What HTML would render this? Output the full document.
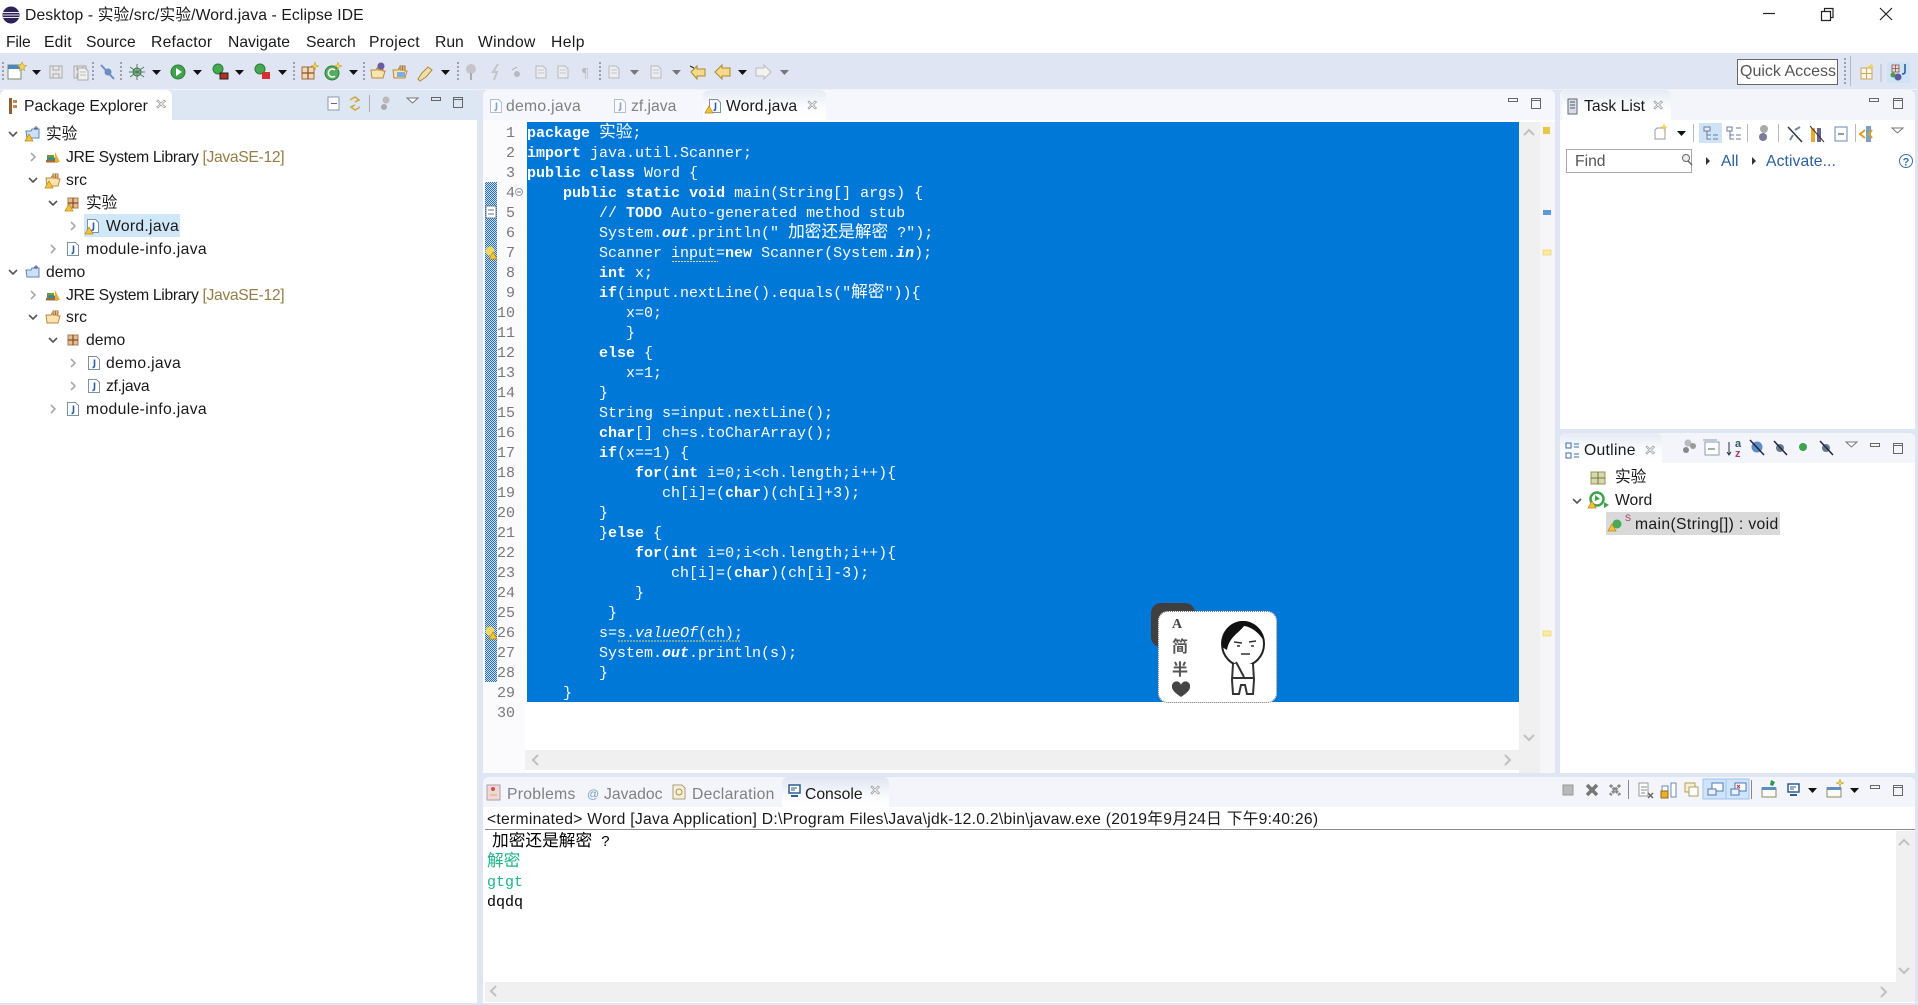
<!DOCTYPE html>
<html lang="zh"><head><meta charset="utf-8"><title>Desktop - 实验/src/实验/Word.java - Eclipse IDE</title>
<style>
html,body{margin:0;padding:0}
body{width:1918px;height:1005px;position:relative;overflow:hidden;background:#e0e5f4;font-family:"Liberation Sans","Noto Sans CJK SC",sans-serif;font-size:15.7px;color:#1a1a1a}
.a{position:absolute}
.t{position:absolute;white-space:nowrap;line-height:20px}
#top{left:0;top:0;width:1918px;height:53px;background:#fff}
.p{position:absolute;background:#fff;border-radius:6px 6px 0 0;overflow:hidden}
.h{position:absolute;left:0;top:0;right:0;height:30px;background:#f3f5fb}
.tab{position:absolute;top:0;height:30px;background:linear-gradient(#e6eaf4,#fbfcfe 60%,#fff);border-radius:6px 6px 0 0}
.g{color:#808080}
.m{font-family:"Liberation Mono","Noto Sans CJK SC",monospace;font-size:15px;white-space:pre}
#code{position:absolute;left:527px;top:122px;width:992px;height:578px;padding-top:2px;background:#0078d7;color:#fff;font-family:"Liberation Mono",monospace;font-size:15px}
#code div{height:20px;line-height:20px;white-space:pre}
.c{font-family:"Noto Sans CJK SC",sans-serif;font-size:16.7px;line-height:0}
#nums{position:absolute;left:490px;top:124px;width:25px;text-align:right;font-family:"Liberation Mono",monospace;font-size:15px;color:#787878}
#nums div{height:20px;line-height:20px}
.lnk{color:#2a5f9e}
svg#o{position:absolute;left:0;top:0;z-index:5}
.n{letter-spacing:.3px}
</style></head><body>
<div class="a" id="top"></div>
<div class="t" style="left:25px;top:6px;letter-spacing:.12px">Desktop - 实验/src/实验/Word.java - Eclipse IDE</div>
<div class="t" style="left:6px;top:33px;letter-spacing:-.2px">File</div>
<div class="t" style="left:44px;top:33px;letter-spacing:.2px">Edit</div>
<div class="t" style="left:86px;top:33px">Source</div>
<div class="t" style="left:151px;top:33px;letter-spacing:.25px">Refactor</div>
<div class="t" style="left:228px;top:33px">Navigate</div>
<div class="t" style="left:306px;top:33px">Search</div>
<div class="t" style="left:369px;top:33px;letter-spacing:.3px">Project</div>
<div class="t" style="left:435px;top:33px">Run</div>
<div class="t" style="left:478px;top:33px;letter-spacing:.3px">Window</div>
<div class="t" style="left:551px;top:33px;letter-spacing:.4px">Help</div>
<div class="a" style="left:0;top:89px;width:1918px;height:1px;background:#eef1f9"></div>

<div class="a" style="left:1737px;top:59px;width:99px;height:24px;border:1px solid #666;background:#fff"></div>
<div class="t" style="left:1740px;top:62px;color:#555;font-size:16px">Quick Access</div>

<!-- Left -->
<div class="p" style="left:0;top:90px;width:477px;height:913px">
<div class="h" style="background:#dde6f3"></div>
<div class="tab" style="left:0;width:172px;background:#fff"></div>
</div>
<div class="t" style="left:24px;top:97px">Package Explorer</div>
<div class="t" style="left:46px;top:125px">实验</div>
<div class="t" style="left:66px;top:148px;letter-spacing:-.34px">JRE System Library <span style="color:#957d47">[JavaSE-12]</span></div>
<div class="t" style="left:66px;top:171px">src</div>
<div class="t" style="left:86px;top:194px">实验</div>
<div class="a" style="left:84px;top:214px;width:96px;height:23px;background:#d0e7f8"></div>
<div class="t n" style="left:106px;top:217px">Word.java</div>
<div class="t" style="left:86px;top:240px;letter-spacing:.37px">module-info.java</div>
<div class="t" style="left:46px;top:263px">demo</div>
<div class="t" style="left:66px;top:286px;letter-spacing:-.34px">JRE System Library <span style="color:#957d47">[JavaSE-12]</span></div>
<div class="t" style="left:66px;top:308px">src</div>
<div class="t" style="left:86px;top:331px">demo</div>
<div class="t n" style="left:106px;top:354px">demo.java</div>
<div class="t" style="left:106px;top:377px;letter-spacing:-.3px">zf.java</div>
<div class="t" style="left:86px;top:400px;letter-spacing:.37px">module-info.java</div>

<!-- Editor -->
<div class="p" style="left:483px;top:90px;width:1072px;height:683px">
<div class="h" style="background:#f6f7fc"></div>
<div class="tab" style="left:220px;width:123px"></div>
<div class="a" style="left:0;top:30px;width:42px;height:653px;background:#fbfbfd"></div>
<div class="a" style="left:1036px;top:32px;width:21px;height:651px;background:#f0f0f0"></div>
<div class="a" style="left:1057px;top:32px;width:15px;height:651px;background:#f6f6f9"></div>
<div class="a" style="left:42px;top:660px;width:994px;height:20px;background:#f0f0f0"></div>
</div>
<div class="t g n" style="left:506px;top:97px">demo.java</div>
<div class="t g" style="left:631px;top:97px">zf.java</div>
<div class="t" style="left:726px;top:97px;letter-spacing:.1px">Word.java</div>

<div class="a" style="left:485px;top:182px;width:12px;height:500px;background:conic-gradient(#2a70b0 25%,#c8dcea 0 50%,#2a70b0 0 75%,#c8dcea 0) 0 0/2px 2px"></div>

<div id="nums"><div>1</div><div>2</div><div>3</div><div>4</div><div>5</div><div>6</div><div>7</div><div>8</div><div>9</div><div>10</div><div>11</div><div>12</div><div>13</div><div>14</div><div>15</div><div>16</div><div>17</div><div>18</div><div>19</div><div>20</div><div>21</div><div>22</div><div>23</div><div>24</div><div>25</div><div>26</div><div>27</div><div>28</div><div>29</div><div>30</div></div>

<div id="code">
<div><b>package</b> <span class="c">实验</span>;</div>
<div><b>import</b> java.util.Scanner;</div>
<div><b>public</b> <b>class</b> Word {</div>
<div>    <b>public</b> <b>static</b> <b>void</b> main(String[] args) {</div>
<div>        // <b>TODO</b> Auto-generated method stub</div>
<div>        System.<b><i>out</i></b>.println(" <span class="c">加密还是解密</span> ?");</div>
<div>        Scanner input=<b>new</b> Scanner(System.<b><i>in</i></b>);</div>
<div>        <b>int</b> x;</div>
<div>        <b>if</b>(input.nextLine().equals("<span class="c">解密</span>")){</div>
<div>           x=0;</div>
<div>           }</div>
<div>        <b>else</b> {</div>
<div>           x=1;</div>
<div>        }</div>
<div>        String s=input.nextLine();</div>
<div>        <b>char</b>[] ch=s.toCharArray();</div>
<div>        <b>if</b>(x==1) {</div>
<div>            <b>for</b>(<b>int</b> i=0;i&lt;ch.length;i++){</div>
<div>               ch[i]=(<b>char</b>)(ch[i]+3);</div>
<div>        }</div>
<div>        }<b>else</b> {</div>
<div>            <b>for</b>(<b>int</b> i=0;i&lt;ch.length;i++){</div>
<div>                ch[i]=(<b>char</b>)(ch[i]-3);</div>
<div>            }</div>
<div>         }</div>
<div>        s=s.<i>valueOf</i>(ch);</div>
<div>        System.<b><i>out</i></b>.println(s);</div>
<div>        }</div>
<div>    }</div>
</div>

<!-- Task list -->
<div class="p" style="left:1560px;top:90px;width:355px;height:339px">
<div class="h"></div>
<div class="tab" style="left:2px;width:109px"></div>
<div class="a" style="left:0;top:30px;width:355px;height:309px;background:#fff"></div>
</div>
<div class="t" style="left:1584px;top:97px">Task List</div>
<div class="a" style="left:1566px;top:149px;width:124px;height:22px;border:1px solid #aaa;background:#fff"></div>
<div class="t" style="left:1575px;top:152px;color:#555">Find</div>
<div class="t lnk" style="left:1721px;top:152px">All</div>
<div class="t lnk" style="left:1766px;top:152px;letter-spacing:.1px">Activate...</div>

<!-- Outline -->
<div class="p" style="left:1560px;top:433px;width:355px;height:340px">
<div class="h"></div>
<div class="tab" style="left:0;width:102px"></div>
</div>
<div class="t" style="left:1584px;top:441px;letter-spacing:.3px">Outline</div>
<div class="t" style="left:1615px;top:468px">实验</div>
<div class="t" style="left:1615px;top:491px">Word</div>
<div class="a" style="left:1606px;top:512px;width:174px;height:23px;background:#d9d9d9"></div>
<div class="t" style="left:1635px;top:515px;letter-spacing:.36px">main(String[]) : void</div>

<!-- Console -->
<div class="p" style="left:483px;top:777px;width:1432px;height:226px">
<div class="h"></div>
<div class="tab" style="left:299px;width:107px;background:linear-gradient(#dfe5f0,#fbfcfe 70%,#fff)"></div>
<div class="a" style="left:0;top:30px;width:1432px;height:196px;background:#fff"></div>
<div class="a" style="left:2px;top:52px;width:1430px;height:1px;background:#8a8a8a"></div>
<div class="a" style="left:1413px;top:54px;width:19px;height:151px;background:#f0f0f0"></div>
<div class="a" style="left:2px;top:205px;width:1430px;height:20px;background:#f0f0f0"></div>
</div>
<div class="t g n" style="left:507px;top:785px">Problems</div>
<div class="t g" style="left:604px;top:785px">Javadoc</div>
<div class="t g n" style="left:692px;top:785px">Declaration</div>
<div class="t" style="left:805px;top:785px">Console</div>
<div class="t" style="left:487px;top:810px;letter-spacing:.27px">&lt;terminated&gt; Word [Java Application] D:\Program Files\Java\jdk-12.0.2\bin\javaw.exe (2019年9月24日 下午9:40:26)</div>
<div class="t m" style="left:483px;top:833px;color:#000"> <span class="c">加密还是解密</span> ?</div>
<div class="t m" style="left:487px;top:853px;color:#1fb488"><span class="c">解密</span></div>
<div class="t m" style="left:487px;top:873px;color:#1fb488">gtgt</div>
<div class="t m" style="left:487px;top:893px;color:#000">dqdq</div>

<!-- Sticker -->
<div class="a" style="left:1151px;top:603px;width:44px;height:44px;background:#3f3f3f;border-radius:10px"></div>
<div class="a" style="left:1158px;top:611px;width:119px;height:92px;background:#fff;border:1px dotted #777;border-radius:10px;box-sizing:border-box"></div>
<div class="t" style="left:1172px;top:615px;font:bold 14px/20px 'Liberation Serif',serif;color:#444">A</div>
<div class="t" style="left:1172px;top:635px;font:bold 16px/20px 'Noto Sans CJK SC',sans-serif;color:#555">简</div>
<div class="t" style="left:1172px;top:658px;font:bold 16px/20px 'Noto Sans CJK SC',sans-serif;color:#555">半</div>

<svg id="o" width="1918" height="1005" viewBox="0 0 1918 1005" fill="none">
<defs>
<g id="w"><path d="M4 0l4 7H0z" fill="#f5c23c" stroke="#b8860b" stroke-width=".7"/></g>
<g id="jf"><path d="M2.5 1.5h8l3 3v10h-11z" fill="#fff" stroke="#7f8fa6"/><path d="M8.5 4.5v6q0 2-2 2" stroke="#2a5ea8" stroke-width="1.6"/></g>
<g id="pk"><path d="M3 3h10v10H3z" fill="#e3bd96" stroke="#a9794a"/><path d="M8 3v10M3 8h10" stroke="#8a4f1f" stroke-width="1.2"/></g>
<g id="src"><path d="M1 6h5l1-2h6v3h2l-2 7H2z" fill="#fbe3b0" stroke="#b78a3e"/><path d="M8 2h5v4H8zM10.500 2v4" stroke="#a97430"/></g>
<g id="jre"><path d="M1 11h12v2.500H1z" fill="#a46a3c"/><path d="M2 8.500h9V11H2z" fill="#3d8a8a"/><path d="M2 6h7v2.500H2z" fill="#6e9a3c"/><path d="M10 3l5 10h-5z" fill="#e8b030"/></g>
<g id="prj"><path d="M1 6h5l1-2h7v9H2z" fill="#cfe0f4" stroke="#5a87b8"/><path d="M11 1v4M9 3h4" stroke="#6c5aa0"/></g>
<g id="ar"><path d="M6 4l4 4-4 4" stroke="#aaa" stroke-width="1.6"/></g>
<g id="ad"><path d="M4 6l4 4 4-4" stroke="#555" stroke-width="1.6"/></g>
<g id="d"><path d="M0 0h9l-4.500 5z" fill="#111"/></g>
<g id="dg"><path d="M0 0h9l-4.500 5z" fill="#777"/></g>
<g id="x"><path d="M1 2l1-1 3 3 3-3 1.500 1-3 3 3 3-1.500 1-3-3-3 3-1-1 3-3z" fill="#fff" stroke="#a0a0a0" stroke-width=".8"/></g>
<g id="mn"><path d="M.5.500h9v3h-9z" stroke="#666"/></g>
<g id="mx"><path d="M.5.500h9v10h-9z" stroke="#666"/><path d="M.5 2.500h9" stroke="#666"/></g>
<g id="tv"><path d="M0 0h11l-5.500 5z" fill="#fff" stroke="#777"/></g>
<g id="run"><circle cx="8" cy="8" r="7" fill="#3fa34d" stroke="#2c7d39"/><path d="M6 4l6 4-6 4z" fill="#fff"/></g>
<g id="gb"><circle cx="6" cy="6" r="5" fill="#47a854" stroke="#2c7d39"/></g>
<g id="gray"><path d="M3 2h7l3 3v9H3z" fill="#f0f0f0" stroke="#aaa"/><path d="M5 6h6M5 9h6" stroke="#bbb"/></g>
<g id="sv"><path d="M2 2h12v12H2z" fill="#e8e8ea" stroke="#aaa"/><path d="M5 2v4h6V2M5 14v-4h6v4" stroke="#aaa"/></g>
<g id="mon"><path d="M3 2h11v8H3z" fill="#fff" stroke="#2d5e8e" stroke-width="1.500"/><path d="M5 5h6M5 7h4" stroke="#2d5e8e"/><path d="M5 13h7" stroke="#2d5e8e" stroke-width="2"/></g>
<g id="pin"><path d="M1 5h14v9H1z" fill="#fbfbf4" stroke="#8a8a6a"/><path d="M1 4h14v3H1z" fill="#5a8ec4"/></g>
</defs>

<!-- title icon -->
<circle cx="11" cy="15" r="8.500" fill="#2c2255"/><path d="M3 12.500h16M3 15h16M3 17.500h16" stroke="#e8e6f2" stroke-width="1"/>
<!-- window ctl -->
<path d="M1763 13.500h12" stroke="#222" stroke-width="1.200"/>
<path d="M1821.500 11.500h9v9h-9zM1824.500 11v-2.500h8.500v9h-2.500" stroke="#222" stroke-width="1.200"/>
<path d="M1880 8l12 12M1892 8l-12 12" stroke="#222" stroke-width="1.200"/>

<!-- main toolbar -->
<g stroke="#9aa0ae" stroke-width="2" stroke-dasharray="2 2"><path d="M3 62v20M93 62v20M121 62v20M294 62v20M364 62v20M458 62v20M600 62v20M1845 58v26"/></g>
<path d="M1850.500 56v30M1881 64v18" stroke="#b4b9c6"/>
<path d="M8 65h13v14H8z" fill="#fff" stroke="#7a8a6a"/><path d="M8 65h13v4H8z" fill="#4a86c4"/><path d="M22 62l1.500 3 3 .5-2.500 2 .5 3-2.500-1.500-2.500 1.500.5-3-2.500-2 3-.5z" fill="#f2d35a" stroke="#b89a2a" stroke-width=".6"/>
<use href="#d" x="32" y="70"/>
<use href="#sv" x="48" y="64"/><use href="#sv" x="72" y="64"/><use href="#gray" x="75" y="66"/>
<path d="M101 65l13 14" stroke="#6a8ec0" stroke-width="2"/><circle cx="108" cy="72" r="3.500" fill="#6a8ec0"/>
<circle cx="137" cy="72" r="4" fill="#a5c9a5" stroke="#3a6a4a"/><path d="M130 67l14 10M130 77l14-10M137 64v16M129 72h16" stroke="#4e7e60" stroke-width="1"/>
<use href="#d" x="152" y="70"/>
<use href="#run" x="170" y="64"/>
<use href="#d" x="193" y="70"/>
<use href="#gb" x="212" y="63"/><path d="M220 73h8v6h-8z" fill="#b03020" stroke="#222"/>
<use href="#d" x="235" y="70"/>
<use href="#gb" x="254" y="63"/><path d="M262 72h8v7h-8z" fill="#d63030"/>
<use href="#d" x="278" y="70"/>
<path d="M302 67h12v12h-12z" fill="#f0d8b8" stroke="#9c6a3c"/><path d="M308 67v12M302 73h12" stroke="#8a4f1f" stroke-width="1.200"/><path d="M315 62l1 3 3 1-3 1-1 3-1-3-3-1 3-1z" fill="#f2d35a" stroke="#b89a2a" stroke-width=".5"/>
<circle cx="332" cy="73" r="7" fill="#54ad5c" stroke="#2c7d39"/><path d="M335 70a4 4 0 1 0 0 6" stroke="#fff" stroke-width="1.500"/><path d="M338 62l1 3 3 1-3 1-1 3-1-3-3-1 3-1z" fill="#f2d35a" stroke="#b89a2a" stroke-width=".5"/>
<use href="#d" x="349" y="70"/>
<use href="#src" x="370" y="64"/><circle cx="381" cy="66" r="3.500" fill="#6a5aa0"/>
<use href="#src" x="392" y="64"/><path d="M397 72h8v5h-8z" fill="#7ab0e0"/>
<path d="M418 79l4-6 6-6 4 3-6 7-6 4z" fill="#f3e0a8" stroke="#a98a40"/>
<use href="#d" x="441" y="70"/>
<g opacity=".75"><circle cx="471" cy="69" r="5" fill="#bbb"/><path d="M471 73v7" stroke="#999" stroke-width="2"/><path d="M498 64l-5 8h4l-3 8" stroke="#bbb" stroke-width="2"/><circle cx="517" cy="74" r="3" fill="#aaa"/><path d="M512 70l5-3" stroke="#999"/>
<use href="#gray" x="533" y="64"/><use href="#gray" x="555" y="64"/><text x="582" y="77" font-size="14" fill="#aaa" font-family="Liberation Serif">¶</text><use href="#gray" x="606" y="64"/><use href="#gray" x="648" y="64"/></g>
<use href="#dg" x="630" y="70"/><use href="#dg" x="672" y="70"/>
<path d="M691 72l6-6v3h8v7h-8v3z" fill="#f7d98a" stroke="#a98a30"/><path d="M690 66l4 2" stroke="#222"/>
<path d="M715 72l7-7v3h8v8h-8v3z" fill="#f7d98a" stroke="#a98a30"/>
<use href="#d" x="738" y="70"/>
<path d="M771 72l-7-7v3h-8v8h8v3z" fill="#f2f2f2" stroke="#bbb"/>
<use href="#dg" x="780" y="70"/>
<path d="M1861 68h11v11h-11zM1866.500 68v11M1861 73.500h11" stroke="#c8a868" fill="#fff6df"/><path d="M1871 63l1 2.500 2.500 1-2.500 1-1 2.500-1-2.500-2.500-1 2.500-1z" fill="#f2d35a"/>
<rect x="1887" y="62" width="23" height="21" fill="#cfe3f7"/>
<path d="M1892 65h7v7h-7zM1895.500 65v7M1892 68.500h7" stroke="#a0442a" stroke-width=".8"/><circle cx="1898" cy="77" r="3.500" fill="#5a5aa0"/><circle cx="1893" cy="75" r="2.500" fill="#4a9a4a"/><path d="M1905 64v8q0 2-3 2" stroke="#2a5ea8" stroke-width="1.600"/>

<!-- Package Explorer -->
<path d="M9 98h3v16H9z" fill="#8a5f3a"/><path d="M13 100h4v3h-4zM13 105h4v3h-4z" fill="#c58a4a"/>
<use href="#x" x="156" y="99"/>
<path d="M328 97h11v13h-11z" fill="#fff" stroke="#8a9ab0"/><path d="M331 103.500h6" stroke="#667"/>
<path d="M350 100l5-3 4 3-4 2M360 107l-5 3-4-3 4-2" stroke="#d0a848" stroke-width="1.600"/>
<path d="M369.500 95v17" stroke="#aab"/>
<circle cx="386" cy="100" r="3.500" fill="#bbb"/><circle cx="384" cy="107" r="3" fill="#aaa"/>
<use href="#tv" x="407" y="98"/><use href="#mn" x="431" y="97"/><use href="#mx" x="453" y="97"/>

<use href="#ad" x="5" y="126"/><use href="#prj" x="25" y="125"/><use href="#w" x="25" y="134"/>
<use href="#ar" x="25" y="149"/><use href="#jre" x="45" y="149"/>
<use href="#ad" x="25" y="172"/><use href="#src" x="45" y="172"/><use href="#w" x="45" y="181"/>
<use href="#ad" x="45" y="195"/><use href="#pk" x="65" y="195"/><use href="#w" x="65" y="204"/>
<use href="#ar" x="65" y="218"/><use href="#jf" x="85" y="218"/><use href="#w" x="85" y="227"/>
<use href="#ar" x="45" y="241"/><use href="#jf" x="65" y="241"/>
<use href="#ad" x="5" y="264"/><use href="#prj" x="25" y="264"/>
<use href="#ar" x="25" y="287"/><use href="#jre" x="45" y="287"/>
<use href="#ad" x="25" y="309"/><use href="#src" x="45" y="309"/>
<use href="#ad" x="45" y="332"/><use href="#pk" x="65" y="332"/>
<use href="#ar" x="65" y="355"/><use href="#jf" x="86" y="355"/>
<use href="#ar" x="65" y="378"/><use href="#jf" x="86" y="378"/>
<use href="#ar" x="45" y="401"/><use href="#jf" x="65" y="401"/>

<!-- Editor tabs -->
<g opacity=".55"><use href="#jf" x="488" y="98"/><use href="#jf" x="612" y="98"/></g>
<use href="#jf" x="707" y="98"/><use href="#w" x="705" y="106"/>
<use href="#x" x="807" y="100"/>
<use href="#mn" x="1508" y="98"/><use href="#mx" x="1531" y="98"/>
<circle cx="519" cy="192" r="3.500" fill="#fff" stroke="#8a9aaa"/><path d="M517 192h4" stroke="#6a7a8a"/>
<path d="M486 206h10v12h-10z" fill="#fff" stroke="#567" stroke-width=".8"/><path d="M488 210h6M488 214h6" stroke="#345" stroke-width=".8"/>
<circle cx="490" cy="251" r="4.500" fill="#f0d860"/><use href="#w" x="489" y="252"/>
<circle cx="490" cy="631" r="4.500" fill="#f0d860"/><use href="#w" x="489" y="632"/>
<path d="M672 261.500h46M618 641h122" stroke="#e8d878" stroke-dasharray="2 1"/>
<path d="M1524 135l5-5 5 5M1524 735l5 5 5-5" stroke="#c0c0c0" stroke-width="2"/>
<path d="M538 755l-5 5 5 5M1505 755l5 5-5 5" stroke="#c0c0c0" stroke-width="2"/>
<rect x="1543" y="127" width="7" height="7" fill="#e8c648"/>
<rect x="1543" y="210" width="8" height="5" fill="#5a9ad8"/>
<rect x="1543" y="250" width="8" height="5" fill="#fbeaa0" stroke="#eccf60" stroke-width=".6"/>
<rect x="1543" y="631" width="8" height="5" fill="#fbeaa0" stroke="#eccf60" stroke-width=".6"/>

<!-- Sticker -->
<path d="M1181 697c-6-4-9-7-9-10a4 4 0 0 1 9-2a4 4 0 0 1 9 2c0 3-3 6-9 10z" fill="#444"/>
<ellipse cx="1243" cy="644" rx="21" ry="22" fill="#fff" stroke="#222" stroke-width="2"/>
<path d="M1222 647c-1-17 10-26 21-26 11 0 20 9 21 20-5-8-12-14-20-15-5 7-15 11-17 24z" fill="#111"/>
<path d="M1234 642l8 1M1249 642l7-1M1237 646h3M1251 646h3M1241 654h9" stroke="#333" stroke-width="1.500"/>
<path d="M1233 664l-1 16 1 14h6l2-9h4l2 9h6l1-14-1-16M1232 678h21M1236 662l8 15" stroke="#333" stroke-width="2" fill="#fff"/>

<!-- Task List -->
<path d="M1568 99h9v15h-9z" fill="#d8dde6" stroke="#667"/><path d="M1570 102h5M1570 105h5M1570 108h5" stroke="#556"/>
<use href="#x" x="1653" y="100"/>
<use href="#mn" x="1869" y="98"/><use href="#mx" x="1893" y="98"/>
<path d="M1657 128h8v11h-10v-9z" fill="#fff" stroke="#999"/><path d="M1664 123l1 3 3 1-3 1-1 3-1-3-3-1 3-1z" fill="#f2d35a"/>
<use href="#d" x="1677" y="131"/>
<path d="M1693.500 124v18M1747.500 124v18M1778.500 124v18M1855.500 124v18" stroke="#b4b9c6"/>
<rect x="1699" y="123" width="23" height="20" fill="#cfe3f7"/>
<path d="M1704 127h6v4h-6zM1707 131v8h4M1707 135h4M1713 135h5M1713 139h5" stroke="#6a7a9a" fill="#e8ecf6"/>
<path d="M1727 127h5v4h-5zM1730 131v8h4M1730 135h4M1736 128h5M1736 135h5M1736 139h5" stroke="#6a7a9a"/>
<circle cx="1764" cy="129" r="4" fill="#aaa"/><circle cx="1763" cy="137" r="4" fill="#7a7a9a"/>
<path d="M1788 127l14 15" stroke="#333" stroke-width="1.500"/><path d="M1793 135l-3 5M1795 130l5-3" stroke="#6a8ab0" stroke-width="2"/>
<path d="M1811 128h4v14h-4z" fill="#e8a830"/><path d="M1817 128h4v14h-4z" fill="#668"/><path d="M1810 126l14 16" stroke="#333"/>
<path d="M1835 127h12v14h-12z" fill="#fff" stroke="#6a8ab0"/><path d="M1838 134h6" stroke="#333"/>
<path d="M1866 126h5v16h-5z" fill="#7aa0c8"/><path d="M1865 130l-5 4 5 4M1872 130l-3 4 3 4" stroke="#d8a020" stroke-width="2"/>
<use href="#tv" x="1892" y="128"/>
<circle cx="1686" cy="158" r="3.500" stroke="#666" fill="#eee"/><path d="M1688 161l4 4" stroke="#666" stroke-width="1.500"/>
<path d="M1706 157l4 4-4 4zM1752 157l4 4-4 4" fill="#333"/>
<circle cx="1906" cy="161" r="6.500" fill="#fff" stroke="#3a6ea8"/>
<text x="1906" y="165.500" font-size="11" font-weight="bold" text-anchor="middle" fill="#3a6ea8" font-family="Liberation Sans">?</text>

<!-- Outline -->
<path d="M1566 443h5v5h-5zM1566 453h5v5h-5zM1574 444h5M1574 447h5M1574 454h5M1574 457h5" stroke="#3a6ea8"/>
<use href="#x" x="1645" y="445"/>
<circle cx="1688" cy="443" r="3.500" fill="#bbb"/><circle cx="1693" cy="446" r="3" fill="#999"/><circle cx="1686" cy="450" r="3" fill="#888"/>
<path d="M1705 442h14v13h-14z" fill="#fff" stroke="#8a9aaa"/><path d="M1703 440h14" stroke="#8a9aaa"/><path d="M1708 449h7" stroke="#555"/>
<text x="1735" y="447" font-size="11" font-weight="bold" fill="#356" font-family="Liberation Sans">a</text>
<text x="1735" y="457" font-size="11" font-weight="bold" fill="#a04080" font-family="Liberation Sans">z</text>
<path d="M1729 442v12M1727 452l2 3 2-3" stroke="#234"/>
<circle cx="1757" cy="447" r="5.500" fill="#5a8ec4"/><path d="M1750 440l14 15" stroke="#224" stroke-width="1.500"/>
<circle cx="1780" cy="448" r="4" fill="#6a7a8a"/><path d="M1774 441l13 14" stroke="#224" stroke-width="1.500"/>
<circle cx="1803" cy="447" r="4" fill="#3fa34d"/>
<circle cx="1826" cy="448" r="4" fill="#6a7a8a"/><path d="M1820 441l13 14" stroke="#224" stroke-width="1.500"/>
<use href="#tv" x="1846" y="442"/><use href="#mn" x="1870" y="443"/><use href="#mx" x="1893" y="443"/>
<path d="M1591 472h14v12h-14z" fill="#d8d8b0" stroke="#8a9a50"/><path d="M1598 472v12M1591 478h14" stroke="#6a7a3a"/>
<use href="#ad" x="1569" y="493"/>
<circle cx="1597" cy="499" r="6.500" fill="#fff" stroke="#3fa34d" stroke-width="2.500"/><path d="M1595 495l5 4-5 2z" fill="#3fa34d"/><use href="#w" x="1588" y="501"/><path d="M1604 502l5 3-5 3z" fill="#3fa34d"/>
<circle cx="1617" cy="524" r="4.500" fill="#4aa85a"/><use href="#w" x="1608" y="524"/>
<text x="1625" y="521" font-size="9" fill="#a03060" font-family="Liberation Sans">S</text>

<!-- Console -->
<path d="M487 785h13v15h-13z" fill="#f0d8d8" stroke="#b0a0a0"/><circle cx="493" cy="789" r="2" fill="#d05050"/><path d="M490 795h7" stroke="#e0b040"/>
<text x="587" y="798" font-size="12" fill="#7aa0c8" font-family="Liberation Sans">@</text>
<path d="M673 785h9l3 3v11h-12z" fill="#f4f0e0" stroke="#b0a070"/><circle cx="679" cy="792" r="3" stroke="#b09040"/>
<use href="#mon" x="786" y="783"/>
<use href="#x" x="870" y="785"/>
<rect x="1563" y="785" width="10" height="10" fill="#b8b8b8" stroke="#999"/>
<path d="M1587 785l10 10M1597 785l-10 10" stroke="#777" stroke-width="3.500"/>
<path d="M1610 785l10 10M1620 785l-10 10" stroke="#888" stroke-width="3" stroke-dasharray="3 1"/>
<path d="M1628.500 780v19M1751.500 780v19" stroke="#888"/>
<path d="M1639 783h9v13h-9z" fill="#fff" stroke="#999"/><path d="M1641 787h6M1641 790h6M1641 793h4" stroke="#888"/><path d="M1648 793l5 5M1653 793l-5 5" stroke="#666" stroke-width="1.500"/>
<path d="M1671 783h5v14h-5zM1662 786h6v11h-6z" fill="#fff" stroke="#6a8ab0"/><rect x="1661" y="791" width="7" height="7" fill="#e8b030" stroke="#986a10"/>
<path d="M1685 783h10v9h-10z" fill="#f8f0d0" stroke="#b0a060"/><path d="M1689 787h9v9h-9z" fill="#fff" stroke="#b0a060"/>
<rect x="1703" y="779" width="46" height="20" fill="#cfe3fa" stroke="#a0c4ec"/><path d="M1726 779v20" stroke="#a0c4ec"/>
<path d="M1712 783h11v8h-11z" fill="#fff" stroke="#4a7ab0"/><path d="M1708 789h8v6h-8z" fill="#eef" stroke="#4a7ab0"/>
<path d="M1735 783h11v8h-11z" fill="#fff" stroke="#4a7ab0"/><path d="M1731 789h8v6h-8z" fill="#eef" stroke="#4a7ab0"/><path d="M1737 785l3 3M1740 785l-3 3" stroke="#c03030"/>
<use href="#pin" x="1761" y="783"/><path d="M1771 780l4 2-2 4-3-1z" fill="#2a9a4a"/>
<use href="#mon" x="1785" y="782"/>
<use href="#d" x="1808" y="788"/>
<use href="#pin" x="1826" y="783"/><path d="M1840 779l1 3 3 1-3 1-1 3-1-3-3-1 3-1z" fill="#f2d35a" stroke="#b89a2a" stroke-width=".5"/>
<use href="#d" x="1850" y="788"/>
<use href="#mn" x="1870" y="785"/><use href="#mx" x="1893" y="785"/>
<path d="M1899 845l5-5 5 5M1899 968l5 5 5-5" stroke="#c0c0c0" stroke-width="2"/>
<path d="M496 986l-5 5 5 5M1881 987l5 5-5 5" stroke="#c0c0c0" stroke-width="2"/>
</svg>
</body></html>
